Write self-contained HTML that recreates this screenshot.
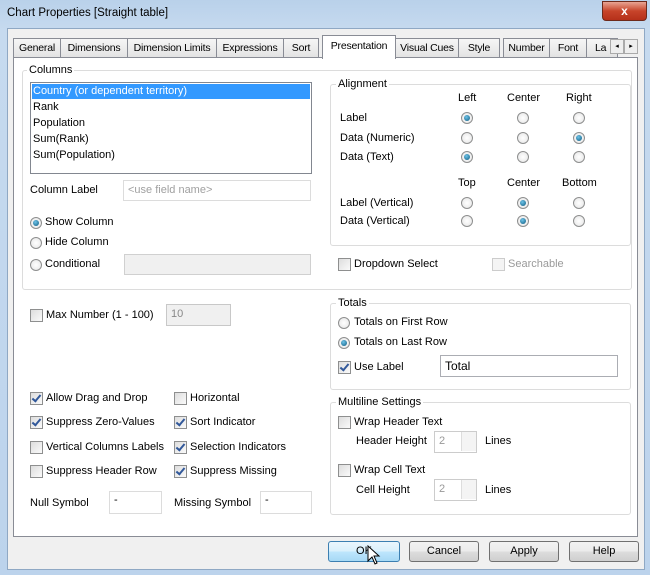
<!DOCTYPE html>
<html><head><style>
body{margin:0;width:650px;height:575px;overflow:hidden;font-family:"Liberation Sans",sans-serif;font-size:11px;color:#000;}
.a{position:absolute;white-space:nowrap}
.win{position:absolute;left:0;top:0;width:650px;height:575px;background:linear-gradient(#b9d1ea,#c6daef 30px,#bcd3ec);}
.dlg{position:absolute;left:7px;top:28px;width:636px;height:540px;background:#f0f0f0;border:1px solid #8fa8c4;}
.panel{position:absolute;left:13px;top:57px;width:623px;height:478px;background:#fff;border:1px solid #898c95;}
.tab{position:absolute;top:38px;height:18px;background:linear-gradient(#f6f6f6,#e3e3e3);border:1px solid #898c95;border-bottom:none;line-height:18px;text-align:center;font-size:10.5px;letter-spacing:-0.2px}
.grp{position:absolute;border:1px solid #dcdcdc;border-radius:3px}
.gl{position:absolute;background:#fff;padding:0 2px;font-size:11px}
.rb{position:absolute;width:10px;height:10px;border-radius:50%;border:1px solid #8e8f8f;background:radial-gradient(#fff,#e4e4e4)}
.rb.on:after{content:"";position:absolute;left:2px;top:2px;width:6px;height:6px;border-radius:50%;background:radial-gradient(circle at 40% 35%,#6ec3e8,#0d5b80)}
.cb{position:absolute;width:11px;height:11px;border:1px solid #8e8f8f;background:linear-gradient(135deg,#ddd,#fafafa)}
.cb.on:after{content:"";position:absolute;left:3px;top:0px;width:3px;height:7px;border:solid #31589a;border-width:0 2px 2px 0;transform:rotate(40deg)}
.inp{position:absolute;border:1px solid #c4c8cf;background:#fff;padding-left:4px;box-sizing:border-box}
.btn{position:absolute;top:541px;height:21px;width:70px;border:1px solid #707070;border-radius:3px;background:linear-gradient(#f2f2f2,#ebebeb 50%,#dddddd 51%,#cfcfcf);text-align:center;line-height:19px;box-sizing:border-box}
</style></head><body>
<div class="win"></div>
<div class="a" style="left:7px;top:7px;font-size:11.5px">Chart Properties [Straight table]</div>
<div class="a" style="left:602px;top:1px;width:43px;height:18px;border-radius:0 0 4px 4px;background:linear-gradient(#e8a493,#c7442a 50%,#b5301a);border:1px solid #6d2a1c;color:#fff;font-weight:bold;text-align:center;line-height:18px;font-size:12px">x</div>
<div class="dlg"></div>
<div class="panel"></div>
<div class="tab" style="left:13px;width:46px">General</div>
<div class="tab" style="left:60px;width:66px">Dimensions</div>
<div class="tab" style="left:127px;width:88px">Dimension Limits</div>
<div class="tab" style="left:216px;width:66px">Expressions</div>
<div class="tab" style="left:283px;width:34px">Sort</div>
<div class="tab" style="left:322px;top:35px;height:23px;width:72px;background:#fff;line-height:20px">Presentation</div>
<div class="tab" style="left:395px;width:62px">Visual Cues</div>
<div class="tab" style="left:458px;width:40px">Style</div>
<div class="tab" style="left:503px;width:45px">Number</div>
<div class="tab" style="left:549px;width:36px">Font</div>
<div class="tab" style="left:586px;width:22px;text-align:left;padding-left:8px">La</div>
<div class="a" style="left:610px;top:39px;width:12px;height:13px;border:1px solid #aaa;background:#eee;font-size:7px;text-align:center;line-height:13px">◂</div>
<div class="a" style="left:624px;top:39px;width:12px;height:13px;border:1px solid #aaa;background:#eee;font-size:7px;text-align:center;line-height:13px">▸</div>

<div class="grp" style="left:22px;top:70px;width:608px;height:218px"></div>
<div class="gl" style="left:27px;top:64px">Columns</div>
<div class="a" style="left:30px;top:82px;width:280px;height:90px;border:1px solid #828790;background:#fff"></div>
<div class="a" style="left:32px;top:84px;width:277px;height:15px;background:#3399ff;color:#fff;padding-left:1px;line-height:15px">Country (or dependent territory)</div>
<div class="a" style="left:33px;top:99px;line-height:16px">Rank<br>Population<br>Sum(Rank)<br>Sum(Population)</div>
<div class="a" style="left:30px;top:184px">Column Label</div>
<div class="inp" style="left:123px;top:180px;width:188px;height:21px;color:#a0a0a0;line-height:18px;border-color:#dcdcdc">&lt;use field name&gt;</div>
<div class="rb on" style="left:30px;top:217px"></div><div class="a" style="left:45px;top:216px">Show Column</div>
<div class="rb" style="left:30px;top:237px"></div><div class="a" style="left:45px;top:236px">Hide Column</div>
<div class="rb" style="left:30px;top:259px"></div><div class="a" style="left:45px;top:258px">Conditional</div>
<div class="inp" style="left:124px;top:254px;width:187px;height:21px;background:#f0f0f0;border-color:#d0d0d0"></div>

<div class="grp" style="left:330px;top:84px;width:299px;height:160px"></div>
<div class="gl" style="left:336px;top:78px">Alignment</div>
<div class="a" style="left:458px;top:92px">Left</div><div class="a" style="left:507px;top:92px">Center</div><div class="a" style="left:566px;top:92px">Right</div>
<div class="a" style="left:340px;top:112px">Label</div><div class="a" style="left:340px;top:132px">Data (Numeric)</div><div class="a" style="left:340px;top:151px">Data (Text)</div>
<div class="rb on" style="left:461px;top:112px"></div><div class="rb" style="left:517px;top:112px"></div><div class="rb" style="left:573px;top:112px"></div>
<div class="rb" style="left:461px;top:132px"></div><div class="rb" style="left:517px;top:132px"></div><div class="rb on" style="left:573px;top:132px"></div>
<div class="rb on" style="left:461px;top:151px"></div><div class="rb" style="left:517px;top:151px"></div><div class="rb" style="left:573px;top:151px"></div>
<div class="a" style="left:458px;top:177px">Top</div><div class="a" style="left:507px;top:177px">Center</div><div class="a" style="left:562px;top:177px">Bottom</div>
<div class="a" style="left:340px;top:197px">Label (Vertical)</div><div class="a" style="left:340px;top:215px">Data (Vertical)</div>
<div class="rb" style="left:461px;top:197px"></div><div class="rb on" style="left:517px;top:197px"></div><div class="rb" style="left:573px;top:197px"></div>
<div class="rb" style="left:461px;top:215px"></div><div class="rb on" style="left:517px;top:215px"></div><div class="rb" style="left:573px;top:215px"></div>
<div class="cb" style="left:338px;top:258px"></div><div class="a" style="left:354px;top:258px">Dropdown Select</div>
<div class="cb" style="left:492px;top:258px;border-color:#ccc;background:#f4f4f4"></div><div class="a" style="left:508px;top:258px;color:#9a9a9a">Searchable</div>

<div class="cb" style="left:30px;top:309px"></div><div class="a" style="left:46px;top:309px">Max Number (1 - 100)</div>
<div class="inp" style="left:166px;top:304px;width:65px;height:22px;background:#f0f0f0;color:#888;line-height:18px;border-color:#c8c8c8">10</div>

<div class="grp" style="left:330px;top:303px;width:299px;height:85px"></div>
<div class="gl" style="left:336px;top:297px">Totals</div>
<div class="rb" style="left:338px;top:317px"></div><div class="a" style="left:354px;top:316px">Totals on First Row</div>
<div class="rb on" style="left:338px;top:337px"></div><div class="a" style="left:354px;top:336px">Totals on Last Row</div>
<div class="cb on" style="left:338px;top:361px"></div><div class="a" style="left:354px;top:361px">Use Label</div>
<div class="inp" style="left:440px;top:355px;width:178px;height:22px;line-height:20px;font-size:12px;border-color:#abadb3">Total</div>

<div class="cb on" style="left:30px;top:392px"></div><div class="a" style="left:46px;top:392px">Allow Drag and Drop</div>
<div class="cb on" style="left:30px;top:416px"></div><div class="a" style="left:46px;top:416px">Suppress Zero-Values</div>
<div class="cb" style="left:30px;top:441px"></div><div class="a" style="left:46px;top:441px">Vertical Columns Labels</div>
<div class="cb" style="left:30px;top:465px"></div><div class="a" style="left:46px;top:465px">Suppress Header Row</div>
<div class="cb" style="left:174px;top:392px"></div><div class="a" style="left:190px;top:392px">Horizontal</div>
<div class="cb on" style="left:174px;top:416px"></div><div class="a" style="left:190px;top:416px">Sort Indicator</div>
<div class="cb on" style="left:174px;top:441px"></div><div class="a" style="left:190px;top:441px">Selection Indicators</div>
<div class="cb on" style="left:174px;top:465px"></div><div class="a" style="left:190px;top:465px">Suppress Missing</div>
<div class="a" style="left:30px;top:497px">Null Symbol</div>
<div class="inp" style="left:109px;top:491px;width:53px;height:23px;line-height:16px;border-color:#dcdcdc">-</div>
<div class="a" style="left:174px;top:497px">Missing Symbol</div>
<div class="inp" style="left:260px;top:491px;width:52px;height:23px;line-height:16px;border-color:#dcdcdc">-</div>

<div class="grp" style="left:330px;top:402px;width:299px;height:111px"></div>
<div class="gl" style="left:336px;top:396px">Multiline Settings</div>
<div class="cb" style="left:338px;top:416px"></div><div class="a" style="left:354px;top:416px">Wrap Header Text</div>
<div class="a" style="left:356px;top:435px">Header Height</div>
<div class="inp" style="left:434px;top:431px;width:43px;height:22px;color:#999;line-height:18px;border-color:#ccc">2</div>
<div class="a" style="left:461px;top:432px;width:14px;height:19px;border-left:1px solid #ddd;background:#f4f4f4"></div>
<div class="a" style="left:485px;top:435px">Lines</div>
<div class="cb" style="left:338px;top:464px"></div><div class="a" style="left:354px;top:464px">Wrap Cell Text</div>
<div class="a" style="left:356px;top:484px">Cell Height</div>
<div class="inp" style="left:434px;top:479px;width:43px;height:22px;color:#999;line-height:18px;border-color:#ccc">2</div>
<div class="a" style="left:461px;top:480px;width:14px;height:19px;border-left:1px solid #ddd;background:#f4f4f4"></div>
<div class="a" style="left:485px;top:484px">Lines</div>

<div class="btn" style="left:328px;width:72px;border-color:#3c7fb1;background:linear-gradient(#eaf6fd,#d9f0fc 50%,#bee6fd 51%,#a7d9f5)">OK</div>
<div class="btn" style="left:409px">Cancel</div>
<div class="btn" style="left:489px">Apply</div>
<div class="btn" style="left:569px">Help</div>
<svg class="a" style="left:367px;top:545px" width="14" height="22"><path d="M1 1 L1 16 L5 12 L8 19 L10 18 L7 11 L12 11 Z" fill="#fff" stroke="#000" stroke-width="1"/></svg>
</body></html>
